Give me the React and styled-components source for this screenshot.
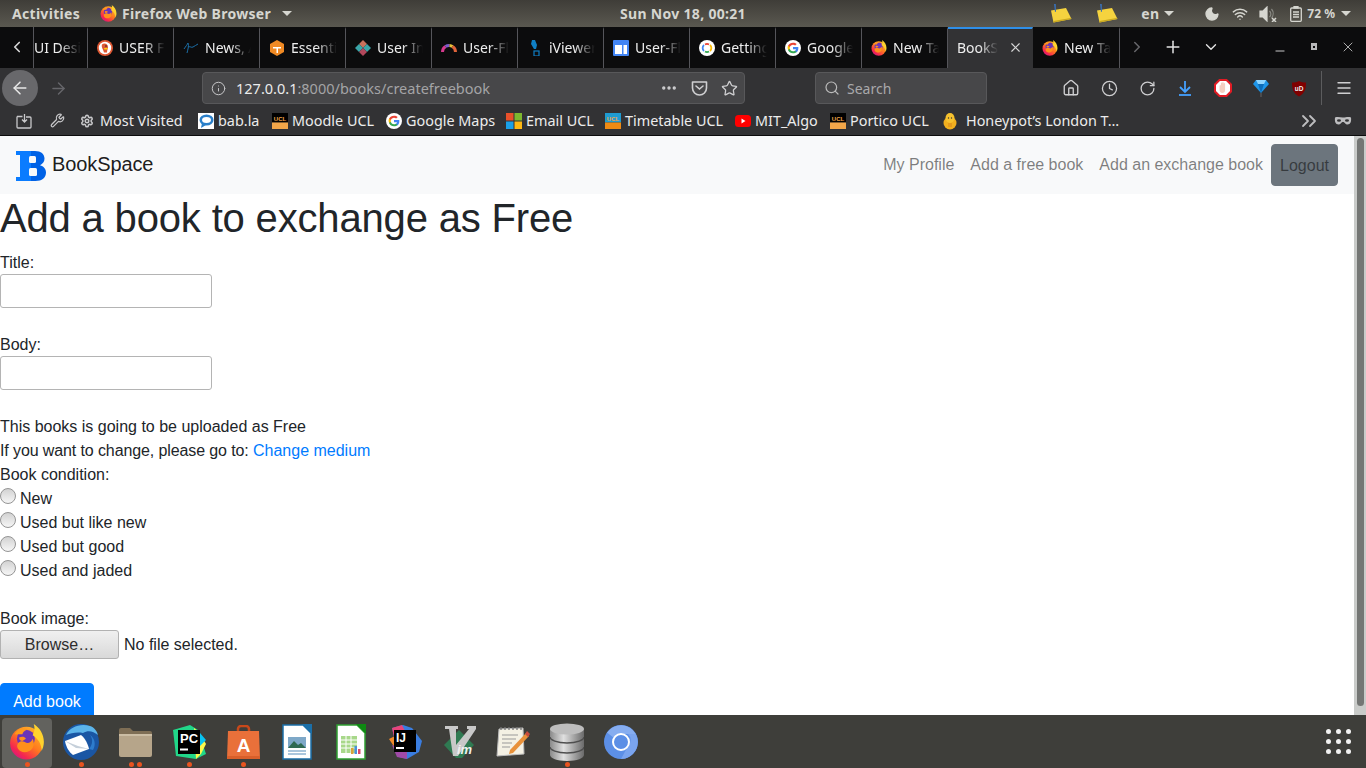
import React from 'react';
import styled, { createGlobalStyle } from 'styled-components';
import { ChevronLeft, ChevronRight, ChevronDown, Plus, X, Minus, ArrowLeft, ArrowRight, Info, Star, Search, Home, Clock, RotateCw, Menu, Wrench, Settings, ChevronsRight, Moon, Wifi, MoreHorizontal } from 'lucide-react';

const Global = createGlobalStyle`
  html, body { margin: 0; padding: 0; height: 100%; overflow: hidden; background: #fff; }
  #root { height: 100%; }
  * { box-sizing: border-box; }
`;

const Desktop = styled.div`
  width: 1366px; height: 768px; display: flex; flex-direction: column; overflow: hidden;
  font-family: "Noto Sans", sans-serif;
`;

/* ---------- GNOME top bar ---------- */
const TopBar = styled.header`
  height: 27px; flex: none; display: grid; grid-template-columns: 1fr auto 1fr; align-items: center;
  background: linear-gradient(#3f3d38, #5a5850); color: #d6d6d0;
  font-size: 14px; font-weight: 700; letter-spacing: .3px;
`;
const TopLeft = styled.div`display: flex; align-items: center; padding-left: 12px;`;
const TopRight = styled.div`display: flex; align-items: center; justify-content: flex-end; padding-right: 15px;`;
const AppMenu = styled.div`display: flex; align-items: center; gap: 5px; margin-left: 20px;`;
const Caret = styled.span`
  display: inline-block; width: 0; height: 0; margin-left: ${p => p.$gap || 6}px;
  border-left: 5px solid transparent; border-right: 5px solid transparent; border-top: 5px solid #d6d6d0;
`;
const Tray = styled.span`
  display: inline-flex; align-items: center; margin-left: ${p => p.$gap}px;
  font-size: ${p => p.$small ? '12px' : 'inherit'}; letter-spacing: ${p => p.$small ? 0 : 'inherit'};
`;

/* ---------- Tabs ---------- */
const TabBar = styled.div`height: 41px; flex: none; display: flex; background: #0c0c0d; color: #eee; font-size: 14px;`;
const ScrollBtn = styled.div`
  width: 34px; flex: none; display: flex; align-items: center; justify-content: center;
  border-right: 1px solid #55555a; color: #d8d8d8; padding-bottom: 2px;
`;
const Tab = styled.div`
  width: ${p => p.$w || 86}px; flex: none; display: flex; align-items: center; gap: ${p => p.$active ? 10 : 6}px;
  padding: ${p => p.$active ? '0 9px 2px 9px' : p.$bare ? '0 6px 2px 0' : '0 8px 2px 9px'};
  border-right: 1px solid ${p => p.$active ? 'transparent' : '#55555a'};
  border-top: 2px solid ${p => p.$active ? '#2f8fe8' : 'transparent'};
  background: ${p => p.$active ? '#323234' : 'transparent'};
`;
const TabLabel = styled.span`
  flex: 1; min-width: 0; overflow: hidden; white-space: nowrap; 
  -webkit-mask-image: linear-gradient(to right, #000 55%, transparent 100%);
  mask-image: linear-gradient(to right, #000 55%, transparent 100%);
`;
const TabTools = styled.div`flex: 1; display: flex; align-items: center; color: #e4e4e4; padding-bottom: 2px;`;
const ToolSlot = styled.span`display: inline-flex; align-items: center; justify-content: center; margin-left: ${p => p.$gap}px; color: ${p => p.$dim ? '#66666a' : 'inherit'};`;
const RestoreGlyph = styled.span`width: 6px; height: 7px; background: #0c0c0d; border: 2px solid #b8b8b8; border-top-width: 3px;`;

/* ---------- Nav toolbar ---------- */
const NavBar = styled.div`height: 40px; flex: none; display: flex; align-items: center; background: #323234; color: #cfcfd1;`;
const BackCircle = styled.div`
  width: 36px; height: 36px; margin-left: 2px; border-radius: 50%; background: #68686b; color: #e8e8e8;
  display: flex; align-items: center; justify-content: center; flex: none;
`;
const UrlBar = styled.div`
  width: 543px; height: 32px; margin-left: 134px; flex: none; display: flex; align-items: center;
  background: #474749; border: 1px solid #58585a; border-radius: 4px; padding: 0 6px 0 8px; font-size: 14.5px; color: #a4a4a6;
`;
const UrlText = styled.span`margin-left: 10px; flex: 1; white-space: nowrap;`;
const UrlHost = styled.span`color: #ececec;`;
const UrlAction = styled.span`display: inline-flex; margin-left: ${p => p.$gap}px; color: #cfcfd1;`;
const SearchBox = styled.div`
  width: 172px; height: 32px; margin-left: 70px; flex: none; display: flex; align-items: center; gap: 7px;
  background: #474749; border: 1px solid #58585a; border-radius: 4px; padding-left: 8px; font-size: 14px; color: #a9a9ab;
`;
const NavIcons = styled.div`display: flex; align-items: center; margin-left: 65px;`;
const NavIcon = styled.span`width: 38px; height: 24px; display: flex; align-items: center; justify-content: center;`;
const NavSep = styled.span`width: 1px; height: 34px; background: #5c5c5e; margin: 0 13px 0 3px;`;

/* ---------- Bookmarks ---------- */
const Bookmarks = styled.div`
  height: 28px; flex: none; display: flex; align-items: center; background: #323234; color: #ececec;
  font-size: 14.4px; padding: 0 0 2px 16px; border-bottom: 1px solid #0c0c0d; white-space: nowrap;
`;
const Bookmark = styled.span`display: inline-flex; align-items: center; gap: ${p => p.$gap || 4}px; margin-left: ${p => p.$ml || 0}px; width: ${p => p.$w}px; flex: none;`;
const BmTools = styled.div`margin-left: auto; display: flex; align-items: center; color: #bdbdbf; padding-right: 14px; gap: 13px;`;

/* ---------- Page ---------- */
const Viewport = styled.div`flex: 1; min-height: 0; display: flex; overflow: hidden; background: #fff;`;
const Page = styled.main`
  flex: 1; min-width: 0; font-family: "Liberation Sans", Arial, sans-serif; font-size: 16px; line-height: 24px; color: #212529;
`;
const Navbar = styled.nav`
  height: 58px; display: flex; align-items: center; background: #f8f9fa; padding: 0 16px;
`;
const Brand = styled.a`display: flex; align-items: center; gap: 6px; font-size: 20px; color: rgba(0,0,0,.9);`;
const LogoBox = styled.span`display: flex; margin-top: 2px;`;
const BrandName = styled.span`padding-bottom: 2px; letter-spacing: -.1px;`;
const NavLinks = styled.div`margin-left: auto; display: flex; align-items: center;`;
const NavLink = styled.a`padding: 8px; color: rgba(0,0,0,.5);`;
const LogoutBtn = styled.button`
  width: 67px; height: 42px; font: inherit; color: rgba(0,0,0,.5); background: #6c757d;
  border: 1px solid #6c757d; border-radius: 4px; line-height: 24px; padding: 2px 0 0;
`;
const Heading = styled.h1`margin: 0 0 8px; font-size: 40px; line-height: 48px; font-weight: 500; letter-spacing: -.17px;`;
const Field = styled.div`margin-bottom: 24px;`;
const Line = styled.div`height: 24px; line-height: 26px; letter-spacing: ${p => p.$tight ? '-.11px' : 'normal'};`;
const TextInput = styled.input`
  display: block; width: 212px; height: 34px; border: 1px solid #b4b4b4; border-radius: 3px; background: #fff; padding: 0 4px;
`;
const BlueLink = styled.a`color: #007bff; letter-spacing: 0;`;
const RadioRow = styled.label`display: flex; align-items: flex-start; height: 24px; gap: 4px; line-height: 26px;`;
const Radio = styled.input`
  appearance: none; -webkit-appearance: none; margin: 2px 0 0; width: 16px; height: 16px; border-radius: 50%; flex: none;
  border: 1px solid #949494; background: linear-gradient(#d2d2d2, #f6f6f6);
`;
const FileRow = styled.div`display: flex; align-items: center; height: 29px; gap: 5px; margin-bottom: 24px;`;
const Browse = styled.button`
  width: 119px; height: 29px; padding: 0; font: inherit; color: #2e2e2e;
  background: linear-gradient(#f0f0f0, #d9d9d9); border: 1px solid #b2b2b2; border-radius: 3px;
`;
const SubmitBtn = styled.button`
  width: 94px; height: 38px; padding: 0; font: inherit; color: #fff; background: #007bff; border: 1px solid #007bff; border-radius: 4px;
`;
const ScrollTrack = styled.div`width: 12px; flex: none; background: #c9cbc9; padding: 2px 2px 2px 3px;`;
const ScrollThumb = styled.div`height: 568px; border-radius: 4px; background: #747674;`;

/* ---------- Dock ---------- */
const Dock = styled.footer`height: 53px; flex: none; display: flex; align-items: center; background: #3e3e3a;`;
const DockRow = styled.div`display: flex; align-items: center; margin-left: 2px;`;
const DockItem = styled.div`
  position: relative; width: 50px; height: 50px; margin-right: 4px; display: flex; align-items: center; justify-content: center;
  border-radius: 4px; background: ${p => p.$active ? '#62625e' : 'transparent'}; margin-top: 2px; padding-bottom: 2px;
`;
const Dots = styled.div`position: absolute; bottom: 1px; left: 0; right: 0; display: flex; justify-content: center; gap: 3px;`;
const Dot = styled.span`width: 5px; height: 5px; border-radius: 50%; background: #e95420;`;
const AppGrid = styled.div`
  margin-left: auto; margin-right: 15px; display: grid; grid-template-columns: repeat(3, 5px); gap: 5px;
`;
const GridDot = styled.span`width: 5px; height: 5px; border-radius: 50%; background: #f2f2f2;`;

/* ---------- Drawings ---------- */
const Firefox = ({ s = 16 }) => (
  <svg width={s} height={s} viewBox="0 0 32 32">
    <defs>
      <linearGradient id="ffa" x1="0.9" y1="0.1" x2="0.2" y2="1"><stop offset="0" stopColor="#ffb52a" /><stop offset=".45" stopColor="#ff7a1e" /><stop offset=".8" stopColor="#f5274f" /><stop offset="1" stopColor="#d0148a" /></linearGradient>
    </defs>
    <circle cx="15.500" cy="17" r="14.500" fill="url(#ffa)" />
    <circle cx="15" cy="13" r="8" fill="#6a33b8" />
    <path d="M5 9c3-5 8-6 11-4-3 1-4 3-4 4-3 0-5 0-7 0z" fill="#ff9a1c" />
    <path d="M22 0c5 3 9 9 9 16 0 3-1 6-2 8 0-6-3-11-8-14 2-3 2-7 1-10z" fill="#ffd22e" />
    <path d="M8 17c2-2 4-2 6-1 3 2 6 0 7-3 2 4 1 9-3 11-4 2-8 1-10-2-1-2-1-3 0-5z" fill="#ff8f1c" />
    <path d="M9 12c2-1 5-1 6 1l-3 2c-2 0-3-1-3-3z" fill="#ff8f1c" />
  </svg>
);
const GoogleG = ({ s = 16 }) => (
  <svg width={s} height={s} viewBox="0 0 24 24">
    <circle cx="12" cy="12" r="12" fill="#fff" />
    <path d="M20 12.200c0-.6 0-1.100-.1-1.600H12v3.100h4.500c-.2 1-.8 1.900-1.700 2.500v2h2.700c1.600-1.500 2.500-3.600 2.500-6z" fill="#4285f4" />
    <path d="M12 20c2.200 0 4.100-.7 5.500-2l-2.700-2c-.8.5-1.700.8-2.800.8-2.100 0-3.900-1.400-4.600-3.400H4.600v2.100C6 18.200 8.800 20 12 20z" fill="#34a853" />
    <path d="M7.400 13.400c-.4-1-.4-1.900 0-2.900V8.400H4.600c-.9 1.900-.9 4.200 0 6.100z" fill="#fbbc05" />
    <path d="M12 7.200c1.200 0 2.300.4 3.200 1.200l2.400-2.400C16.100 4.700 14.200 4 12 4 8.800 4 6 5.800 4.600 8.400l2.800 2.100C8.100 8.600 9.900 7.200 12 7.200z" fill="#ea4335" />
  </svg>
);
const Ducky = () => (
  <svg width="16" height="16" viewBox="0 0 16 16">
    <circle cx="8" cy="8" r="8" fill="#de5833" /><circle cx="8" cy="8" r="6.200" fill="#fff" />
    <path d="M5 4.500c2-2 6-1 6 2.500 0 2-1 3-1 5.500H7C6.500 10 4 7 5 4.500z" fill="#de5833" />
    <path d="M7 8h4l-1 1.500H7.500z" fill="#fdd20a" /><circle cx="9" cy="6" r=".8" fill="#222" />
  </svg>
);
const Wave = () => (
  <svg width="16" height="16" viewBox="0 0 16 16" fill="none" stroke="#1b6fa8" strokeWidth="1">
    <path d="M1 9c2-3 3-4 4-6 1 3 0 6-1 10M5 7c3-1 3 1 5 0s3-2 5-3" />
  </svg>
);
const HexIcon = () => (
  <svg width="16" height="16" viewBox="0 0 16 16">
    <path d="M8 0l7 4v8l-7 4-7-4V4z" fill="#f08a24" /><path d="M4 7h8v1.500H9V13H7.500V8.500H4z" fill="#fff" />
  </svg>
);
const Diamonds = () => (
  <svg width="16" height="16" viewBox="0 0 16 16">
    <path d="M8 0l4 4-4 4-4-4z" fill="#c9715b" /><path d="M4 4l4 4-4 4-4-4z" fill="#3aa5a8" />
    <path d="M12 4l4 4-4 4-4-4z" fill="#3aa5a8" /><path d="M8 8l4 4-4 4-4-4z" fill="#b2485c" />
  </svg>
);
const Rainbow = () => (
  <svg width="16" height="16" viewBox="0 0 16 16" fill="none" strokeWidth="3">
    <path d="M1.500 12a6.500 6.500 0 0 1 3-5.500" stroke="#d63a8e" /><path d="M4.500 6.500a6.500 6.500 0 0 1 4-1" stroke="#7a5cc8" />
    <path d="M8.500 5.500a6.500 6.500 0 0 1 3 1" stroke="#e8c23a" /><path d="M11.500 6.500a6.500 6.500 0 0 1 3 5.500" stroke="#e0633a" />
  </svg>
);
const Pin = () => (
  <svg width="16" height="16" viewBox="0 0 16 16">
    <path d="M5 0h3l2 5-1 4H7L4 4z" fill="#0f7fc4" /><rect x="7" y="11" width="5" height="5" fill="none" stroke="#0f7fc4" strokeWidth="1.200" />
  </svg>
);
const Sites = () => (
  <svg width="16" height="16" viewBox="0 0 16 16">
    <rect width="16" height="16" rx="1" fill="#4285f4" /><rect x="2" y="5" width="12" height="9" fill="#fff" /><rect x="9" y="5" width="1.500" height="9" fill="#4285f4" />
  </svg>
);
const GettingStarted = () => (
  <svg width="16" height="16" viewBox="0 0 16 16" fill="none" strokeWidth="1.800">
    <circle cx="8" cy="8" r="8" fill="#fff" />
    <path d="M5 5a4 4 0 0 0 0 6" stroke="#4285f4" /><path d="M6 4.500a4 4 0 0 1 4 0" stroke="#ea4335" />
    <path d="M11 5a4 4 0 0 1 0 6" stroke="#fbbc05" /><path d="M6 11.500a4 4 0 0 0 4 0" stroke="#34a853" />
  </svg>
);
const Note = () => (
  <svg width="24" height="19" viewBox="0 0 24 19">
    <path d="M2 6.500L17 4l5.500 11L4.500 18.500z" fill="#f5d33f" /><path d="M4.500 18.500l18-3.500-1-1-17 3z" fill="#c9a81f" />
    <path d="M5 0h1.800L7 7.500l-1 .5z" fill="#3a6fb4" />
  </svg>
);
const Volume = () => (
  <svg width="18" height="16" viewBox="0 0 18 16" fill="none" stroke="#d6d6d0" strokeWidth="1.200">
    <path d="M1 5h3l4-4v14l-4-4H1z" fill="#d6d6d0" /><path d="M10.500 5a4 4 0 0 1 0 6M12.500 3a7 7 0 0 1 0 9" stroke="#8a8a84" />
    <path d="M13 12l4 4M17 12l-4 4" strokeWidth="1.500" />
  </svg>
);
const Battery = () => (
  <svg width="12" height="16" viewBox="0 0 12 16" fill="none" stroke="#d6d6d0" strokeWidth="1.300">
    <rect x=".7" y="2" width="10.600" height="13.300" rx="1" /><rect x="4" y=".5" width="4" height="1.500" fill="#d6d6d0" />
    <path d="M3 6h6M3 8.500h6M3 11h6" />
  </svg>
);
const Pocket = () => (
  <svg width="17" height="16" viewBox="0 0 17 16" fill="none" stroke="#cfcfd1" strokeWidth="1.600">
    <path d="M1.500 2h14v6a6.500 6.500 0 0 1-14 0z" strokeLinejoin="round" /><path d="M5 6l3.500 3L12 6" strokeLinecap="round" />
  </svg>
);
const Download = () => (
  <svg width="16" height="16" viewBox="0 0 16 16" fill="none" stroke="#45a1ff" strokeWidth="1.800">
    <path d="M8 1v10M3 7l5 5 5-5" /><path d="M2 15h12" />
  </svg>
);
const StopHand = () => (
  <svg width="18" height="18" viewBox="0 0 18 18">
    <path d="M5.500 1h7L17 5.500v7L12.500 17h-7L1 12.500v-7z" fill="#fff" stroke="#e01b24" strokeWidth="2" />
    <path d="M5.500 7c0-1.500 1.400-1.500 1.400 0V4.500c0-1.300 1.300-1.300 1.300 0V4c0-1.300 1.500-1.300 1.500 0v1c0-1.200 1.400-1.200 1.400 0v6c0 2-1 3-3 3-1.500 0-2.200-1-2.600-3z" fill="#f4cfc2" />
  </svg>
);
const Gem = () => (
  <svg width="16" height="18" viewBox="0 0 16 18">
    <path d="M3 1h10l3 4-8 9-8-9z" fill="#1e95e8" /><path d="M3 1h10l-2 4H5z" fill="#8fd5ff" /><path d="M5 5h6l-3 9z" fill="#0d6cb8" />
    <path d="M8 14v4" stroke="#555" strokeWidth="1.500" />
  </svg>
);
const UBlock = () => (
  <svg width="16" height="17" viewBox="0 0 16 17">
    <path d="M1 2.500C4 2.500 6 2 8 1c2 1 4 1.500 7 1.500 0 7-1.500 11-7 14-5.500-3-7-7-7-14z" fill="#800000" />
    <text x="8" y="10.500" textAnchor="middle" fontFamily="Liberation Sans" fontSize="6.500" fontWeight="700" fill="#eee">uD</text>
  </svg>
);
const SaveIcon = () => (
  <svg width="16" height="16" viewBox="0 0 16 16" fill="none" stroke="#c8c8ca" strokeWidth="1.300">
    <path d="M1 3.500V14a1 1 0 0 0 1 1h12a1 1 0 0 0 1-1V5a1 1 0 0 0-1-1h-4M1 3.500h5.500M8.500 1v8M6 6.500l2.500 2.500L11 6.500" />
  </svg>
);
const BabLa = () => (
  <svg width="16" height="16" viewBox="0 0 16 16">
    <rect width="16" height="16" fill="#fff" /><ellipse cx="8.500" cy="7" rx="7" ry="5.500" fill="#2a7fc9" /><path d="M4 10l-1 5 5-3z" fill="#2a7fc9" /><ellipse cx="8.500" cy="7" rx="4.500" ry="3" fill="#fff" />
  </svg>
);
const Ucl = ({ a = '#000', b = '#f2a649', c = '#f2a649' }) => (
  <svg width="16" height="16" viewBox="0 0 16 16">
    <rect width="16" height="9.500" fill={a} /><rect y="9.500" width="16" height="6.500" fill={b} />
    <text x="8" y="8" textAnchor="middle" fontFamily="Liberation Sans" fontSize="6" fontWeight="700" fill={c}>UCL</text>
  </svg>
);
const Windows = () => (
  <svg width="16" height="16" viewBox="0 0 16 16">
    <rect width="7.500" height="7.500" fill="#e8502a" /><rect x="8.500" width="7.500" height="7.500" fill="#7db72f" />
    <rect y="8.500" width="7.500" height="7.500" fill="#1aa0e8" /><rect x="8.500" y="8.500" width="7.500" height="7.500" fill="#fdb813" />
  </svg>
);
const YouTube = () => (
  <svg width="16" height="12" viewBox="0 0 16 12"><rect width="16" height="12" rx="3.500" fill="#f00" /><path d="M6.500 3.500l4 2.500-4 2.500z" fill="#fff" /></svg>
);
const Honey = () => (
  <svg width="14" height="18" viewBox="0 0 14 18">
    <ellipse cx="7" cy="11" rx="6.500" ry="6.500" fill="#f2b01e" /><ellipse cx="7" cy="6" rx="4.500" ry="5" fill="#f7c22e" />
    <circle cx="5.500" cy="6" r=".7" fill="#333" /><circle cx="8.500" cy="6" r=".7" fill="#333" /><path d="M5 11h4v4H5z" fill="#e59a1c" />
  </svg>
);
const MaskIcon = () => (
  <svg width="18" height="10" viewBox="0 0 18 10"><path d="M1 1.500c3-1 5 0 8 0s5-1 8 0c.5 4-.5 7-3.500 7-2.500 0-2.500-2.500-4.500-2.500S7 8.500 4.500 8.500C1.500 8.500.5 5.500 1 1.500z" fill="#bdbdbf" /><ellipse cx="5" cy="4.500" rx="2" ry="1.300" fill="#323234" /><ellipse cx="13" cy="4.500" rx="2" ry="1.300" fill="#323234" /></svg>
);
const Logo = () => (
  <svg width="30" height="30" viewBox="0 0 30 30">
    <path d="M0 0h19c6 0 9.500 3 9.500 7.500 0 3-1.700 5.500-4.500 6.700 3.700 1 6 3.700 6 7.300C30 26.500 26 30 19.500 30H0v-4h4V4H0z" fill="#0062e6" />
    <path d="M0 0h15v30H0v-4h4V4H0z" fill="#0a7cff" />
    <rect x="13" y="5" width="7" height="7" rx="1.500" fill="#f8f9fa" /><rect x="13" y="17" width="8" height="8" rx="1.500" fill="#f8f9fa" />
  </svg>
);

/* dock art */
const Thunderbird = () => (
  <svg width="36" height="36" viewBox="0 0 36 36">
    <circle cx="18" cy="18" r="18" fill="#1a56a4" />
    <path d="M3 11C7 3 17-1 27 2c4 1 7 5 8 9-5-4-10-5-15-2-6-1-12 0-17 2z" fill="#5cb4ea" />
    <path d="M2 17l16-6c4 3 7 9 8 14L10 31C6 28 3 23 2 17z" fill="#fff" />
    <path d="M2 17l13 5 11 3-13-1z" fill="#c6d0da" />
    <path d="M26 25c4-5 4-10 1-14 5 3 6 10 3 15z" fill="#2d7ccc" />
  </svg>
);
const Folder = () => (
  <svg width="33" height="31" viewBox="0 0 33 31">
    <path d="M0 4a2 2 0 0 1 2-2h9l3 3h17a2 2 0 0 1 2 2v4H0z" fill="#7e6e55" />
    <path d="M0 8h33v21a2 2 0 0 1-2 2H2a2 2 0 0 1-2-2z" fill="#b6a58a" /><path d="M0 8h33v2H0z" fill="#cbbda4" />
  </svg>
);
const PyCharm = () => (
  <svg width="34" height="34" viewBox="0 0 34 34">
    <path d="M1 5l17-5 8 5 8 24-10 5-20-3z" fill="#21d789" /><path d="M22 3l5 4 7 12-5 10-5 5z" fill="#fcf84a" /><path d="M28 8l6 7-6 6z" fill="#07c3f2" />
    <rect x="6" y="5" width="22" height="24" fill="#000" />
    <text x="8" y="18" fontFamily="Liberation Sans" fontWeight="700" fontSize="13" fill="#fff">PC</text>
    <rect x="8" y="23.500" width="8" height="2" fill="#fff" />
  </svg>
);
const Bag = () => (
  <svg width="33" height="34" viewBox="0 0 33 34">
    <path d="M11 7V4a3 3 0 0 1 3-3h5a3 3 0 0 1 3 3v3" fill="none" stroke="#c8481a" strokeWidth="2.500" />
    <path d="M1 6h31l1 28H0z" fill="#e9703a" /><path d="M0 31h33v3H0z" fill="#d95f2a" />
    <text x="16.500" y="27" textAnchor="middle" fontFamily="Liberation Sans" fontWeight="700" fontSize="19" fill="#fff">A</text>
  </svg>
);
const Writer = () => (
  <svg width="30" height="36" viewBox="0 0 30 36">
    <path d="M1 1h20l8 8v26H1z" fill="#fff" stroke="#1b6fa8" strokeWidth="1.500" /><path d="M20 0h10v10z" fill="#1b6fa8" />
    <rect x="6" y="13" width="18" height="11" fill="#7ea8c8" /><path d="M6 24l6-7 4 4 3-2 5 5z" fill="#2f6a52" />
    <path d="M6 27h18M6 30h18" stroke="#8fb4d2" strokeWidth="1.500" />
  </svg>
);
const Calc = () => (
  <svg width="30" height="36" viewBox="0 0 30 36">
    <path d="M1 1h20l8 8v26H1z" fill="#fff" stroke="#2f9e32" strokeWidth="1.500" /><path d="M20 0h10v10z" fill="#0e8a12" />
    <rect x="5" y="12" width="16" height="17" fill="#a8d88a" /><path d="M5 16h16M5 20h16M5 24h16M10 12v17M15 12v17" stroke="#fff" strokeWidth="1" />
    <rect x="15" y="24" width="2.500" height="6" fill="#d9a23a" /><rect x="18.500" y="22" width="2.500" height="8" fill="#4a90d9" /><rect x="22" y="25" width="2.500" height="5" fill="#d94a6a" />
  </svg>
);
const Idea = () => (
  <svg width="33" height="34" viewBox="0 0 33 34">
    <path d="M3 3l11-3 9 3 10 13-3 11-12 7-8-2z" fill="#3a7de0" /><path d="M3 3l10-3 3 6-11 6z" fill="#e8447a" /><path d="M0 14l6-3 0 12z" fill="#f08a2a" /><path d="M3 20l5 12 10 2 0-8z" fill="#a04aa8" />
    <rect x="5" y="5" width="22" height="22" fill="#000" />
    <text x="7" y="17" fontFamily="Liberation Sans" fontWeight="700" fontSize="12" fill="#fff">IJ</text>
    <rect x="7" y="22" width="8" height="2" fill="#fff" />
  </svg>
);
const Vim = () => (
  <svg width="34" height="32" viewBox="0 0 34 32">
    <path d="M17 4l15 15-12 13H14L2 19z" fill="#2f7a52" />
    <path d="M3 0h13v3h-2v16L27 3h-2V0h9v3L16 30h-5L7 3H3z" fill="#c8c8c8" />
    <text x="15" y="28" fontFamily="Liberation Sans" fontStyle="italic" fontWeight="700" fontSize="13" fill="#f0f0f0">im</text>
  </svg>
);
const Notepad = () => (
  <svg width="35" height="31" viewBox="0 0 35 31">
    <path d="M3 3l24-1 1 26-27 2z" fill="#f4f1e4" stroke="#bbb" /><path d="M5 1v3M9 1v3M13 1v3M17 1v3M21 1v3M25 1v3" stroke="#777" strokeWidth="1.300" />
    <path d="M6 9h16M6 13h14M6 17h10M6 21h8" stroke="#999" />
    <path d="M14 24l16-17 3 3-16 17-4 1z" fill="#e8913a" /><path d="M29 8l2-3 3 3-2 3z" fill="#c94a3a" />
  </svg>
);
const Database = () => (
  <svg width="34" height="38" viewBox="0 0 34 38">
    <defs><linearGradient id="db" x1="0" x2="1"><stop offset="0" stopColor="#8a8a8a" /><stop offset=".4" stopColor="#e0e0e0" /><stop offset="1" stopColor="#6a6a6a" /></linearGradient></defs>
    <path d="M0 6v26c0 3 7 6 17 6s17-3 17-6V6z" fill="url(#db)" />
    <ellipse cx="17" cy="6" rx="17" ry="5.500" fill="#bdbdbd" />
    <path d="M0 14c0 3 7 6 17 6s17-3 17-6M0 24c0 3 7 6 17 6s17-3 17-6" fill="none" stroke="#4e4e4e" strokeWidth="1.500" />
  </svg>
);
const Chromium = () => (
  <svg width="34" height="34" viewBox="0 0 34 34">
    <circle cx="17" cy="17" r="17" fill="#5c8fe6" />
    <path d="M3 7.500A17 17 0 0 1 31.800 9L17 9a8 8 0 0 0-7 4z" fill="#86adf0" />
    <path d="M31.800 9A17 17 0 0 1 17 34l7-13a8 8 0 0 0 0-12z" fill="#7aa4ee" />
    <circle cx="17" cy="17" r="8" fill="#5c8fe6" stroke="#fff" strokeWidth="2" />
  </svg>
);

const tabs = [
  [<Ducky key="d" />, 'USER Flow'], [<Wave key="d" />, 'News, Articles'], [<HexIcon key="d" />, 'Essential'], [<Diamonds key="d" />, 'User Interface'],
  [<Rainbow key="d" />, 'User-Flow'], [<Pin key="d" />, 'iViewer'], [<Sites key="d" />, 'User-Flow'], [<GettingStarted key="d" />, 'Getting'],
  [<GoogleG key="d" />, 'Google'], [<Firefox key="d" />, 'New Tab'],
];

const marks = [
  { ml: 15, w: 118, gap: 6, icon: <Settings size={14} strokeWidth={2.600} color="#c8c8ca" />, t: 'Most Visited' },
  { w: 74, icon: <BabLa />, t: 'bab.la' },
  { w: 114, icon: <Ucl />, t: 'Moodle UCL' },
  { w: 120, icon: <GoogleG />, t: 'Google Maps' },
  { w: 99, icon: <Windows />, t: 'Email UCL' },
  { w: 130, icon: <Ucl a="#1f9bd1" b="#ef8a12" c="#f2a649" />, t: 'Timetable UCL' },
  { w: 95, icon: <YouTube />, t: 'MIT_Algo' },
  { w: 113, icon: <Ucl />, t: 'Portico UCL' },
  { w: 180, gap: 9, icon: <Honey />, t: 'Honeypot’s London T…' },
];

const dock = [
  { el: <Firefox s={36} />, dots: 1, active: true }, { el: <Thunderbird />, dots: 1 }, { el: <Folder />, dots: 2 }, { el: <PyCharm />, dots: 1 },
  { el: <Bag />, dots: 1 }, { el: <Writer /> }, { el: <Calc /> }, { el: <Idea /> }, { el: <Vim /> }, { el: <Notepad /> }, { el: <Database />, dots: 1 }, { el: <Chromium /> },
];

const conditions = ['New', 'Used but like new', 'Used but good', 'Used and jaded'];

export default function App() {
  return (
    <>
      <Global />
      <Desktop>
        <TopBar>
          <TopLeft>
            <span>Activities</span>
            <AppMenu><Firefox s={17} /><span>Firefox Web Browser</span><Caret /></AppMenu>
          </TopLeft>
          <span>Sun Nov 18, 00:21</span>
          <TopRight>
            <Note />
            <Tray $gap={22}><Note /></Tray>
            <Tray $gap={22}>en<Caret $gap={5} /></Tray>
            <Tray $gap={30}><Moon size={16} fill="#d6d6d0" stroke="#d6d6d0" /></Tray>
            <Tray $gap={12}><Wifi size={16} strokeWidth={2.200} /></Tray>
            <Tray $gap={11}><Volume /></Tray>
            <Tray $gap={13}><Battery /></Tray>
            <Tray $gap={5} $small>72 %<Caret /></Tray>
          </TopRight>
        </TopBar>

        <TabBar>
          <ScrollBtn><ChevronLeft size={18} strokeWidth={2.200} /></ScrollBtn>
          <Tab $w={54} $bare><TabLabel>UI Design</TabLabel></Tab>
          {tabs.map(([icon, t], i) => (
            <Tab key={i}>{icon}<TabLabel>{t}</TabLabel></Tab>
          ))}
          <Tab $active $w={85}><TabLabel>BookSpace</TabLabel><X size={15} strokeWidth={1.800} color="#d8d8d8" /></Tab>
          <Tab $w={87}><Firefox /><TabLabel>New Tab</TabLabel></Tab>
          <TabTools>
            <ToolSlot $gap={8} $dim><ChevronRight size={18} /></ToolSlot>
            <ToolSlot $gap={17}><Plus size={20} strokeWidth={1.800} /></ToolSlot>
            <ToolSlot $gap={19}><ChevronDown size={18} strokeWidth={1.800} /></ToolSlot>
            <ToolSlot $gap={53}><Minus size={14} strokeWidth={1.500} style={{ marginTop: 8 }} /></ToolSlot>
            <ToolSlot $gap={24}><RestoreGlyph /></ToolSlot>
            <ToolSlot $gap={23}><X size={16} strokeWidth={1.500} color="#aaa" /></ToolSlot>
          </TabTools>
        </TabBar>

        <NavBar>
          <BackCircle><ArrowLeft size={20} strokeWidth={1.800} /></BackCircle>
          <ToolSlot $gap={11} $dim><ArrowRight size={19} strokeWidth={1.800} /></ToolSlot>
          <UrlBar>
            <Info size={15} strokeWidth={1.600} color="#c6c6c8" />
            <UrlText><UrlHost>127.0.0.1</UrlHost>:8000/books/createfreebook</UrlText>
            <UrlAction $gap={0}><MoreHorizontal size={18} strokeWidth={2.500} /></UrlAction>
            <UrlAction $gap={13}><Pocket /></UrlAction>
            <UrlAction $gap={13}><Star size={17} strokeWidth={1.800} /></UrlAction>
          </UrlBar>
          <SearchBox><Search size={16} strokeWidth={1.800} color="#bbb" />Search</SearchBox>
          <NavIcons>
            <NavIcon><Home size={18} strokeWidth={1.800} /></NavIcon>
            <NavIcon><Clock size={17} strokeWidth={1.800} /></NavIcon>
            <NavIcon><RotateCw size={17} strokeWidth={1.800} /></NavIcon>
            <NavIcon><Download /></NavIcon>
            <NavIcon><StopHand /></NavIcon>
            <NavIcon><Gem /></NavIcon>
            <NavIcon><UBlock /></NavIcon>
            <NavSep />
            <Menu size={18} strokeWidth={1.800} />
          </NavIcons>
        </NavBar>

        <Bookmarks>
          <SaveIcon />
          <Wrench size={15} strokeWidth={2} color="#c8c8ca" style={{ marginLeft: 18 }} />
          {marks.map((m, i) => (
            <Bookmark key={i} $ml={m.ml} $w={m.w} $gap={m.gap}>{m.icon}{m.t}</Bookmark>
          ))}
          <BmTools><ChevronsRight size={24} strokeWidth={1.800} /><MaskIcon /></BmTools>
        </Bookmarks>

        <Viewport>
          <Page>
            <Navbar>
              <Brand><LogoBox><Logo /></LogoBox><BrandName>BookSpace</BrandName></Brand>
              <NavLinks>
                <NavLink>My Profile</NavLink>
                <NavLink>Add a free book</NavLink>
                <NavLink>Add an exchange book</NavLink>
                <LogoutBtn>Logout</LogoutBtn>
              </NavLinks>
            </Navbar>
            <Heading>Add a book to exchange as Free</Heading>
            <Field>
              <Line>Title:</Line>
              <TextInput />
            </Field>
            <Field>
              <Line>Body:</Line>
              <TextInput />
            </Field>
            <Line>This books is going to be uploaded as Free</Line>
            <Line $tight>If you want to change, please go to: <BlueLink>Change medium</BlueLink></Line>
            <Line>Book condition:</Line>
            <Field>
              {conditions.map(c => (
                <RadioRow key={c}><Radio type="radio" name="condition" />{c}</RadioRow>
              ))}
            </Field>
            <Line>Book image:</Line>
            <FileRow><Browse>Browse…</Browse><span>No file selected.</span></FileRow>
            <SubmitBtn>Add book</SubmitBtn>
          </Page>
          <ScrollTrack><ScrollThumb /></ScrollTrack>
        </Viewport>

        <Dock>
          <DockRow>
            {dock.map((d, i) => (
              <DockItem key={i} $active={d.active}>
                {d.el}
                {d.dots ? <Dots>{Array.from({ length: d.dots }).map((_, j) => <Dot key={j} />)}</Dots> : null}
              </DockItem>
            ))}
          </DockRow>
          <AppGrid>{Array.from({ length: 9 }).map((_, i) => <GridDot key={i} />)}</AppGrid>
        </Dock>
      </Desktop>
    </>
  );
}
